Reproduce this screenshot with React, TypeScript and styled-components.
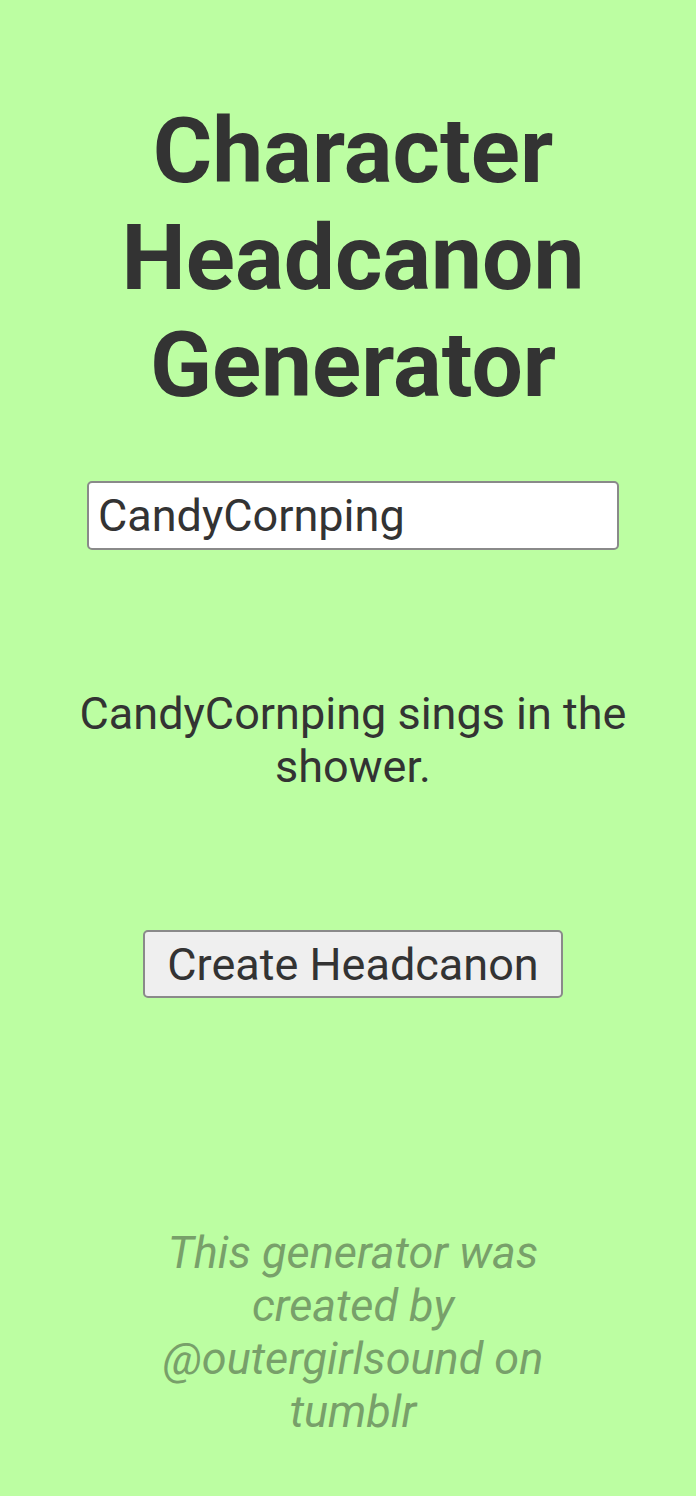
import React, { useState } from 'react';
import styled, { createGlobalStyle } from 'styled-components';

const outcomes = [
  'sings in the shower.',
  'is secretly afraid of the dark.',
  'collects rocks that look like animals.',
  'talks to plants when nobody is around.',
];

export default function App() {
  const [name, setName] = useState('CandyCornping');
  const [result, setResult] = useState('CandyCornping sings in the shower.');

  const handleCreate = () => {
    const pick = outcomes[Math.floor(Math.random() * outcomes.length)];
    setResult(`${name} ${pick}`);
  };

  return (
    <>
      <GlobalStyle />
      <Page>
        <Title>Character Headcanon Generator</Title>
        <NameInput value={name} onChange={(e) => setName(e.target.value)} />
        <Result>{result}</Result>
        <CreateButton onClick={handleCreate}>Create Headcanon</CreateButton>
        <Credit>This generator was created by @outergirlsound on tumblr</Credit>
      </Page>
    </>
  );
}

const GlobalStyle = createGlobalStyle`
  body {
    margin: 0;
    background-color: #bcfea2;
    font-family: Roboto, "Liberation Sans", sans-serif;
    color: #333;
  }
`;

const Page = styled.div`
  display: flex;
  flex-direction: column;
  align-items: center;
  text-align: center;
  min-height: 1496px;
  padding: 98px 0 0 10px;
  box-sizing: border-box;
`;

const Title = styled.h1`
  margin: 0;
  width: 480px;
  font-size: 91px;
  line-height: 107px;
  font-weight: 700;
  color: #333;
`;

const NameInput = styled.input`
  margin-top: 62px;
  width: 532px;
  height: 69px;
  box-sizing: border-box;
  padding: 0 9px;
  font-family: Roboto, "Liberation Sans", sans-serif;
  font-size: 45px;
  color: #333;
  background: #fff;
  border: 2px solid #8a8a8a;
  border-radius: 5px;
  outline: none;
`;

const Result = styled.p`
  margin: 137px 0 0;
  width: 590px;
  font-size: 45px;
  line-height: 53px;
`;

const CreateButton = styled.button`
  margin-top: 137px;
  width: 420px;
  height: 68px;
  font-family: Roboto, "Liberation Sans", sans-serif;
  font-size: 45px;
  color: #333;
  background: #efefef;
  border: 2px solid #8a8a8a;
  border-radius: 5px;
  cursor: pointer;
`;

const Credit = styled.p`
  margin: 228px 0 0;
  width: 400px;
  font-size: 45px;
  line-height: 53px;
  font-style: italic;
  color: #78a06a;
`;
